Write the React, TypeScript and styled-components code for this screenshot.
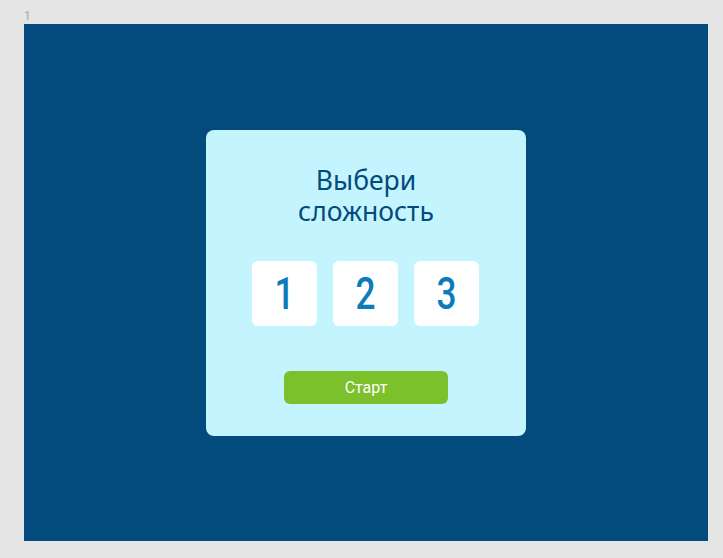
import React from "react";
import styled, {createGlobalStyle} from "styled-components";

const GlobalStyle = createGlobalStyle`
  html, body {
    margin: 0;
    padding: 0;
    background: #E5E5E5;
  }
  * {
    box-sizing: border-box;
  }
`

const levels = [1, 2, 3];

export default function App() {
   return (
      <Canvas>
         <GlobalStyle/>
         <FrameLabel>1</FrameLabel>
         <Frame>
            <Card>
               <Title>
                  <TitleLine>Выбери</TitleLine>
                  <TitleLine>сложность</TitleLine>
               </Title>
               <Levels>
                  {levels.map(level => (
                     <LevelButton key={level}>
                        <Digit>{level}</Digit>
                     </LevelButton>
                  ))}
               </Levels>
               <StartButton>Старт</StartButton>
            </Card>
         </Frame>
      </Canvas>
   );
}

const Canvas = styled.div`
  width: 723px;
  height: 558px;
  padding: 0 15px 0 24px;
`
const FrameLabel = styled.div`
  height: 24px;
  padding-top: 10px;
  font-family: "Roboto", sans-serif;
  font-size: 12px;
  line-height: 12px;
  color: #A8A8A8;
`
const Frame = styled.div`
  width: 684px;
  height: 517px;
  background: #034A7D;
  display: flex;
  align-items: center;
  justify-content: center;
`
const Card = styled.div`
  width: 320px;
  height: 306px;
  margin-top: 1px;
  background: #C4F4FE;
  border-radius: 8px;
  display: flex;
  flex-direction: column;
  align-items: center;
  padding-top: 35px;
`
const Title = styled.h1`
  margin: 0;
  font-family: "Noto Sans", sans-serif;
  font-weight: 400;
  font-size: 26.5px;
  text-align: center;
  color: #034A7D;
`
const TitleLine = styled.span`
  display: block;
  height: 31px;
  line-height: 31px;
`
const Levels = styled.div`
  display: flex;
  gap: 16px;
  margin-top: 34px;
  margin-left: -1px;
`
const LevelButton = styled.button`
  width: 65px;
  height: 65px;
  border: none;
  border-radius: 6px;
  background: #FFFFFF;
  display: flex;
  align-items: center;
  justify-content: center;
  padding: 0;
  cursor: pointer;
`
const Digit = styled.span`
  font-family: "Roboto", sans-serif;
  font-weight: 500;
  font-size: 44px;
  line-height: 1;
  color: #0B7BBB;
  transform: scaleX(0.8);
`
const StartButton = styled.button`
  margin-top: 45px;
  width: 164px;
  height: 33px;
  border: none;
  border-radius: 6px;
  background: #7CC02C;
  color: #FFFFFF;
  font-family: "Roboto", sans-serif;
  font-size: 16px;
  cursor: pointer;
`
